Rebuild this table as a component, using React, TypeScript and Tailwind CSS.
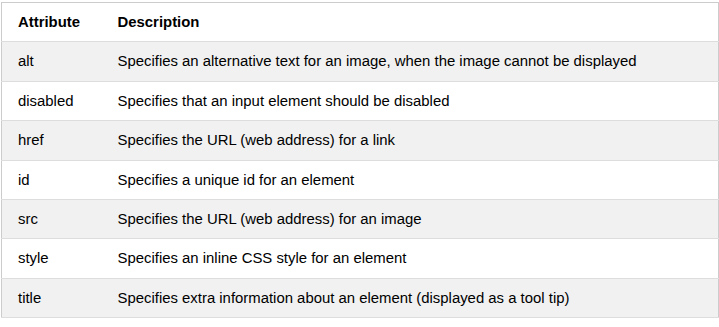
const rows = [
  ["alt", "Specifies an alternative text for an image, when the image cannot be displayed"],
  ["disabled", "Specifies that an input element should be disabled"],
  ["href", "Specifies the URL (web address) for a link"],
  ["id", "Specifies a unique id for an element"],
  ["src", "Specifies the URL (web address) for an image"],
  ["style", "Specifies an inline CSS style for an element"],
  ["title", "Specifies extra information about an element (displayed as a tool tip)"],
];

export default function App() {
  return (
    <div className="bg-white w-[719px] h-[327px] pt-[2px] pl-[1px] font-['Liberation_Sans',Arial,sans-serif] text-[14.9px] leading-[22.4px] text-black">
      <table className="w-[718px] border-collapse border border-[#ccc]">
        <thead>
          <tr className="bg-white border-b border-[#ddd]">
            <th className="w-[108px] pl-4 pr-2 py-2 text-left font-bold">Attribute</th>
            <th className="px-2 py-2 text-left font-bold">Description</th>
          </tr>
        </thead>
        <tbody>
          {rows.map(([attr, desc], i) => (
            <tr
              key={attr}
              className={`border-b border-[#ddd] ${i % 2 === 0 ? "bg-[#f1f1f1]" : "bg-white"}`}
            >
              <td className="pl-4 pr-2 py-2">{attr}</td>
              <td className="px-2 py-2">{desc}</td>
            </tr>
          ))}
        </tbody>
      </table>
    </div>
  );
}
